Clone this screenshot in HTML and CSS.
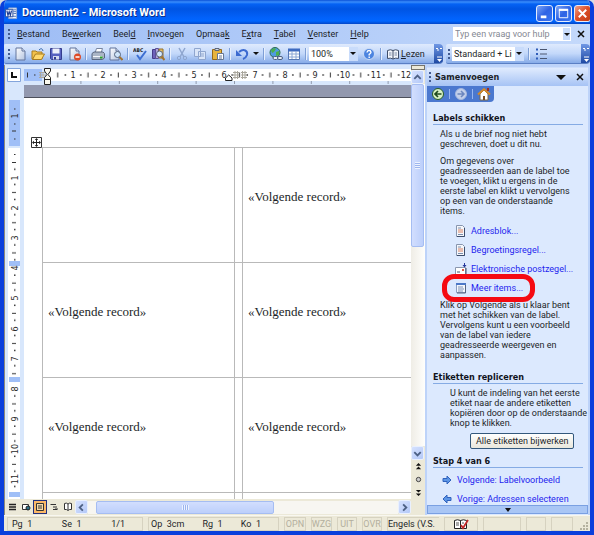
FILE: index.html
```html
<!DOCTYPE html>
<html lang="nl">
<head>
<meta charset="utf-8">
<title>Document2 - Microsoft Word</title>
<link rel="stylesheet" href="styles.css">
</head>
<body>
<svg class="defs" width="0" height="0" aria-hidden="true">
  <defs>
    <linearGradient id="metal" x1="0" y1="0" x2="1" y2="1"><stop offset="0" stop-color="#fff"/><stop offset="1" stop-color="#b4c4e0"/></linearGradient>
    <symbol id="page" viewBox="0 0 14 14"><path d="M3 1h6l3 3v9H3z" fill="url(#metal)" stroke="#62759c"/><path d="M9 1v3h3" fill="#dfe8f6" stroke="#62759c"/></symbol>
    <symbol id="letter" viewBox="0 0 12 12"><path d="M1.500 .5h6l2 2v9h-8z" fill="#f5f7fb" stroke="#8795ae"/><path d="M9.500 3v8.500H2" fill="none" stroke="#3d4d6b"/><path d="M3 3h3M3 9.500h5" stroke="#7c8dab"/><path d="M3 5h5M3 7h5" stroke="#d98264"/></symbol>
    <symbol id="chev-up" viewBox="0 0 12 12"><path d="M2.500 7.500 6 4l3.500 3.500" fill="none" stroke="#4d6185" stroke-width="2"/></symbol>
    <symbol id="arrow" viewBox="0 0 10 10"><path d="M1 3.500h4V1l4 4-4 4V6.500H1z" fill="#5d96e6" stroke="#2f62bd"/></symbol>
  </defs>
</svg>
<div class="window">
  <header class="titlebar">
    <svg class="logo" viewBox="0 0 14 14"><path d="M4 1h8.500v11.500H4z" fill="#eef3fc" stroke="#98aed4"/><path d="M9 3h3M9 5h3M9 7h3M6 10h6" stroke="#5477b8"/><path d="M.5 2.500h8v8h-8z" fill="#f4f7fe" stroke="#264c9c"/><path d="m2 4 1.200 5L4.500 5l1.300 4L7 4" fill="none" stroke="#1e3f94" stroke-width="1.300"/></svg>
    <h1>Document2 - Microsoft Word</h1>
    <div class="captions">
      <button class="caption" aria-label="Minimaliseren"><svg viewBox="0 0 16 16"><path d="M4 11.500h6" stroke="#fff" stroke-width="3"/></svg></button>
      <button class="caption" aria-label="Maximaliseren"><svg viewBox="0 0 16 16"><path d="M3.500 4.500h9v8h-9z" fill="none" stroke="#fff"/><path d="M3 4h10" stroke="#fff" stroke-width="2"/></svg></button>
      <button class="caption close" aria-label="Sluiten"><svg viewBox="0 0 16 16"><path d="m4 4 8 8m0-8-8 8" stroke="#fff" stroke-width="2"/></svg></button>
    </div>
  </header>

  <nav class="menubar">
    <span class="grip"></span>
    <ul class="menus">
      <li><a href="#"><u>B</u>estand</a></li>
      <li><a href="#">Be<u>w</u>erken</a></li>
      <li><a href="#">Beel<u>d</u></a></li>
      <li><a href="#"><u>I</u>nvoegen</a></li>
      <li><a href="#">Opmaa<u>k</u></a></li>
      <li><a href="#">E<u>x</u>tra</a></li>
      <li><a href="#"><u>T</u>abel</a></li>
      <li><a href="#"><u>V</u>enster</a></li>
      <li><a href="#"><u>H</u>elp</a></li>
    </ul>
    <div class="ask">
      <input type="text" aria-label="Vraag" placeholder="Typ een vraag voor hulp">
      <button class="drop" aria-label="Vragenlijst"></button>
    </div>
    <button class="x" aria-label="Document sluiten"><svg viewBox="0 0 8 8"><path d="m1 1 6 6m0-6L1 7" stroke="#111" stroke-width="1.500"/></svg></button>
  </nav>

  <div class="toolbars">
    <div class="toolbar standard">
      <span class="grip"></span>
      <button aria-label="Nieuw"><svg viewBox="0 0 14 14"><use href="#page"/></svg></button>
      <button aria-label="Openen"><svg viewBox="0 0 14 14"><path d="M1 4h4l1 1h5v7H1z" fill="#f3c24c" stroke="#a87c20"/><path d="m1.500 12.500 3-5.500h9l-3 5.500z" fill="#ffd96d" stroke="#a87c20"/><path d="M8 3q3-3 4 1" fill="none" stroke="#3565a8"/></svg></button>
      <button aria-label="Opslaan"><svg viewBox="0 0 14 14"><path d="M1.500 1.500h11v11h-10l-1-1z" fill="#5761c0" stroke="#343c8e"/><path d="M3.500 1.500h7v5h-7z" fill="#eef1fb"/><path d="M4 9h6v3.500H4z" fill="#d5dbee"/><path d="M5 10h2v2.500H5z" fill="#343c8e"/></svg></button>
      <button aria-label="Machtiging"><svg viewBox="0 0 14 14"><use href="#page"/><circle cx="10.500" cy="10" r="3.500" fill="#df4a26"/><path d="M8.500 10h4" stroke="#fff" stroke-width="1.500"/></svg></button>
      <i class="sep"></i>
      <button aria-label="Afdrukken"><svg viewBox="0 0 14 14"><path d="m4 6 1.500-4.500h6L10 6z" fill="#fff" stroke="#7886a0"/><path d="M1 6.500 3 5h9l1.500 1.500V11l-2 1.500H1z" fill="#aab5c6" stroke="#59667f"/><path d="M2 9.500h9" stroke="#f3f6fa"/><path d="M9 10.500h2.500" stroke="#2aa02a" stroke-width="2"/></svg></button>
      <button aria-label="Afdrukvoorbeeld"><svg viewBox="0 0 14 14"><use href="#page" x="-2"/><circle cx="8.500" cy="7.500" r="3" fill="#cfe5fa" stroke="#55647e"/><path d="m10.500 10 3 3" stroke="#a37430" stroke-width="2"/></svg></button>
      <i class="sep"></i>
      <button aria-label="Spelling"><svg viewBox="0 0 14 14"><text class="abc" x="0" y="5">ABC</text><path d="m4 8 3 4 6-8" fill="none" stroke="#3d6fd2" stroke-width="2"/></svg></button>
      <button aria-label="Onderzoeken"><svg viewBox="0 0 14 14"><path d="M1.500 2.500h3v9h-3z" fill="#6d62bb" stroke="#463d88"/><path d="M4.500 1.500h3v10h-3z" fill="#b1a3d8" stroke="#5c5198"/><path d="M8 2h4v9H8z" fill="#e6c064" stroke="#95702a"/><circle cx="8.500" cy="7" r="3" fill="#d8ebfb" stroke="#5a647c"/><path d="m10.500 9.500 3 3.500" stroke="#a37430" stroke-width="2"/></svg></button>
      <i class="sep"></i>
      <button aria-label="Knippen" disabled><svg viewBox="0 0 14 14"><path d="m4 1 5 9m1-9-5 9" stroke="#8fa6cf" stroke-width="1.500"/><circle cx="4" cy="11" r="1.700" fill="none" stroke="#8fa6cf"/><circle cx="10" cy="11" r="1.700" fill="none" stroke="#8fa6cf"/></svg></button>
      <button aria-label="Kopiëren" disabled><svg viewBox="0 0 14 14"><path d="M1.500 1.500h6v8h-6zM5.500 4.500h7v8h-7z" fill="#d9e5f8" stroke="#8fa6cf"/><path d="M7 7h4M7 9h4" stroke="#8fa6cf"/></svg></button>
      <button aria-label="Plakken"><svg viewBox="0 0 14 14"><path d="M1.500 2.500h9v10h-9z" fill="#e6b33e" stroke="#94691b"/><path d="M4 1.500h4v2H4z" fill="#d4d9e2" stroke="#5c6678"/><path d="M6.500 6.500h6v6h-6z" fill="#fff" stroke="#667797"/><path d="M8 9h3M8 11h3" stroke="#667797"/></svg></button>
      <i class="sep"></i>
      <button aria-label="Ongedaan maken"><svg viewBox="0 0 14 14"><path d="M4 5c5-4 9-1 8 3q-1 3-4 4" fill="none" stroke="#3b6ad0" stroke-width="2"/><path d="M1 3v6h6z" fill="#3b6ad0"/></svg></button>
      <button class="tiny" aria-label="Lijst met acties"></button>
      <i class="sep"></i>
      <button aria-label="Hyperlink"><svg viewBox="0 0 14 14"><circle cx="6" cy="5.500" r="5" fill="#4f9be0" stroke="#2b6b50"/><path d="M2 3q3-3 5-1l-2 3-2 1zM7 5l3-1v4l-3 1z" fill="#4bb04b"/><rect x="4" y="9.500" width="5" height="3" rx="1.500" fill="#e8eef7" stroke="#4b5f80"/><rect x="8.500" y="9.500" width="5" height="3" rx="1.500" fill="#e8eef7" stroke="#4b5f80"/></svg></button>
      <button aria-label="Tabel invoegen"><svg viewBox="0 0 14 14"><path d="M1.500 2.500h11v10h-11z" fill="#fff" stroke="#5577b4"/><path d="M1 3h12" stroke="#3f6bc0" stroke-width="3"/><path d="M5 4v8M9 4v8M2 7h10M2 10h10" stroke="#8ba6d4"/></svg></button>
      <i class="sep"></i>
      <span class="combo zoom"><select aria-label="In-/uitzoomen"><option>100%</option></select></span>
      <button aria-label="Help"><svg viewBox="0 0 14 14"><circle cx="7" cy="7" r="5.500" fill="#4b84e0" stroke="#ccdcf5"/><path d="M5 5.500Q5.200 3.500 7 3.500T9 5.300Q9 6.300 7.200 7.300V8.500M7.200 9.500V11" fill="none" stroke="#fff" stroke-width="1.400"/></svg></button>
      <i class="sep"></i>
      <button class="read"><svg viewBox="0 0 14 14"><path d="M1.500 3.500q3-1.500 5.500 0 2.500-1.500 5.500 0v8q-3-1-5.500.5-2.500-1.500-5.500-.5zM7 3.500V12" fill="#f3f6fb" stroke="#3f4d68"/><path d="M3 6h2.500M3 8h2.500M8.500 6H11M8.500 8H11" stroke="#7c8ba7"/></svg><span><u>L</u>ezen</span></button>
      <button class="more" aria-label="Meer knoppen"><svg viewBox="0 0 8 20"><path d="M1 4.500h2M5 4.500h2M2 6h2M2 13h5" stroke="#fff"/><path d="m2 15 5 0-2.500 3z" fill="#fff"/></svg></button>
    </div>
    <div class="toolbar format">
      <span class="grip"></span>
      <span class="combo style"><select aria-label="Stijl"><option>Standaard + Links: 0,2 cm</option></select></span>
      <i class="sep"></i>
      <button aria-label="Opsommingstekens"><svg viewBox="0 0 14 14"><path d="M2 2.500h2M2 7h2M2 11.500h2" stroke="#2f5cb8" stroke-width="2"/><path d="M6 2.500h7M6 7h7M6 11.500h7" stroke="#4a5670"/></svg></button>
      <button class="more" aria-label="Meer knoppen"><svg viewBox="0 0 8 20"><path d="M1 4.500h2M5 4.500h2M2 6h2M2 13h5" stroke="#fff"/><path d="m2 15 5 0-2.500 3z" fill="#fff"/></svg></button>
    </div>
  </div>

  <main class="workspace">
    <section class="editor">
      <div class="corner"><svg viewBox="0 0 14 14"><path d="M.5.5h13v13H.5z" fill="#fff" stroke="#83a5dc"/><path d="M5 4v5h5" fill="none" stroke="#111" stroke-width="2"/></svg></div>
      <div class="hruler">
        <svg width="700" height="20">
          <defs><pattern id="hticks" x="18.700" y="0" width="30.300" height="20" patternUnits="userSpaceOnUse"><path d="M7 10h1.500M22 10h1.500" stroke="#333" stroke-width="1.500"/><path d="M15 7.500v5" stroke="#333"/></pattern>
          <pattern id="htabs" x="19" y="0" width="38.400" height="20" patternUnits="userSpaceOnUse"><path d="M38 16v3" stroke="#8a93a5"/></pattern></defs>
          <path d="M24 4h700v12H24z" fill="#fff"/><path d="M0 4h18v12H0z" fill="#a0bff7"/>
          <path d="M3.500 7.500v5M10 10h1.500" stroke="#333"/>
          <path d="M28 0h700v20H28z" fill="url(#hticks)"/><path d="M20 0h700v20H20z" fill="url(#htabs)"/>
          <g class="nums"><text x="49" y="13">1</text><text x="79" y="13">2</text><text x="110" y="13">3</text><text x="140" y="13">4</text><text x="170" y="13">5</text><text x="200" y="13">6</text><text x="231" y="13">7</text><text x="261" y="13">8</text><text x="291" y="13">9</text><text x="321" y="13">10</text><text x="352" y="13">11</text><text x="382" y="13">12</text></g>
          <path d="M15 7.500h7M15 10h7M15 12.500h7M16.500 7v6M19 7v6M209 7.500h6M209 10h6M209 12.500h6M211 6v8M213.500 6v8M217 7.500h6M217 10h6M217 12.500h6M218.500 6v8M221 6v8" stroke="#aaa79d"/>
          <path d="M20.500 3.500h6V6l-2.500 3.500 2.500 3v7h-6v-7l2.500-3L20.500 6zM20.500 14.500h6" fill="#fbf9ee" stroke="#222"/>
          <path d="M201.500 15.500v-2.500l3.200-3 3.300 3v2.500z" fill="#fff" stroke="#222"/>
        </svg>
      </div>
      <div class="vscroll">
        <span class="split"></span>
        <button class="sb" aria-label="Omhoog"><svg viewBox="0 0 12 12"><use href="#chev-up"/></svg></button>
        <div class="vtrack"><span class="vthumb"></span></div>
        <button class="sb" aria-label="Omlaag"><svg class="flip" viewBox="0 0 12 12"><use href="#chev-up"/></svg></button>
        <button class="browse" aria-label="Vorige pagina"><svg viewBox="0 0 8 8"><path d="m4 0 3 3H1zM4 4l3 3H1z" fill="#111"/></svg></button>
        <button class="browse" aria-label="Bladeren"><svg viewBox="0 0 8 8"><circle cx="4" cy="4" r="2.500" fill="#ccc" stroke="#333"/></svg></button>
        <button class="browse" aria-label="Volgende pagina"><svg class="flip" viewBox="0 0 8 8"><path d="m4 0 3 3H1zM4 4l3 3H1z" fill="#111"/></svg></button>
      </div>
      <div class="vruler">
        <svg width="19" height="700">
          <defs><pattern id="vticks" x="0" y="62.300" width="19" height="30.200" patternUnits="userSpaceOnUse"><path d="M9 7h1.500M9 22h1.500" stroke="#333" stroke-width="1.500"/><path d="M7 15h4" stroke="#333"/></pattern></defs>
          <path d="M3 63h12v700H3z" fill="#fff"/>
          <path d="M3 78h12v700H3z" fill="url(#vticks)"/>
          <path d="M9 69.500h1.500M7 77.500h4" stroke="#333"/>
          <path d="M4 15h11v46H4zM4 176h11v5H4zM4 292h11v5H4zM4 407h11v5H4z" fill="#a0bff7"/>
          <path d="M9 24h1.500M7 46h4M9 39h1.500M9 54h1.500" stroke="#333"/>
          <g class="nums"><text transform="translate(13 31)rotate(-90)">1</text><text transform="translate(13 93)rotate(-90)">1</text><text transform="translate(13 123)rotate(-90)">2</text><text transform="translate(13 153)rotate(-90)">3</text><text transform="translate(13 183)rotate(-90)">4</text><text transform="translate(13 213)rotate(-90)">5</text><text transform="translate(13 244)rotate(-90)">6</text><text transform="translate(13 274)rotate(-90)">7</text><text transform="translate(13 304)rotate(-90)">8</text><text transform="translate(13 334)rotate(-90)">9</text><text transform="translate(13 364)rotate(-90)">10</text><text transform="translate(13 394)rotate(-90)">11</text></g>
        </svg>
      </div>
      <div class="canvas">
        <div class="sheet">
          <svg class="handle" viewBox="0 0 11 11"><path d="M.5.5h10v10H.5z" fill="#fff" stroke="#333"/><path d="M5.500 2v7M2 5.500h7" stroke="#222"/><path d="m5.500 1 1.700 2H3.800zM5.500 10l1.700-2H3.800zM1 5.500l2-1.700v3.400zM10 5.500 8 3.800v3.400z" fill="#222"/></svg>
          <table class="labels">
            <colgroup><col class="wide"><col class="gutter"><col></colgroup>
            <tr><td></td><td></td><td>«Volgende record»</td></tr>
            <tr><td>«Volgende record»</td><td></td><td>«Volgende record»</td></tr>
            <tr><td>«Volgende record»</td><td></td><td>«Volgende record»</td></tr>
            <tr><td></td><td></td><td></td></tr>
          </table>
        </div>
      </div>
      <div class="footrow">
        <button class="view" aria-label="Normaal"><svg viewBox="0 0 12 12"><path d="M3 3.500h7M3 6h7M3 8.500h7" stroke="#222" stroke-width="1.300"/></svg></button>
        <button class="view" aria-label="Weblay-out"><svg viewBox="0 0 12 12"><path d="M2.500 3.500h6v5h-6z" fill="#fff" stroke="#333"/><circle cx="8" cy="7" r="2" fill="#2d6f85" stroke="#222"/></svg></button>
        <button class="view on" aria-label="Afdruklay-out"><svg viewBox="0 0 12 12"><path d="M2.500 2.500h7v7h-7z" fill="#f8dba9" stroke="#333"/><path d="M4 5h4M4 7h4" stroke="#333"/></svg></button>
        <button class="view" aria-label="Overzicht"><svg viewBox="0 0 12 12"><path d="M3 3.500h5M5 6h4M5 8.500h4M3 3v1M7 8h3" stroke="#333"/></svg></button>
        <button class="view" aria-label="Leesindeling"><svg viewBox="0 0 12 12"><path d="M2.500 2.500q2-1 3.500.5 1.500-1.500 3.500-.5v6q-2-.5-3.500 1-1.500-1.500-3.500-1zM6 3v6" fill="#fff" stroke="#333"/></svg></button>
        <button class="sb" aria-label="Naar links"><svg class="left" viewBox="0 0 12 12"><use href="#chev-up"/></svg></button>
        <div class="htrack"><span class="hthumb"></span></div>
        <button class="sb" aria-label="Naar rechts"><svg class="right" viewBox="0 0 12 12"><use href="#chev-up"/></svg></button>
      </div>
    </section>

    <aside class="pane">
      <div class="panehead">
        <span class="grip"></span>
        <h2>Samenvoegen</h2>
        <button class="tri" aria-label="Andere taakvensters"></button>
        <button class="x" aria-label="Taakvenster sluiten"><svg viewBox="0 0 8 8"><path d="m1 1 6 6m0-6L1 7" stroke="#111" stroke-width="1.500"/></svg></button>
      </div>
      <div class="panenav">
        <button aria-label="Terug"><svg viewBox="0 0 14 14"><circle cx="7" cy="7" r="5.500" fill="#d7efc4" stroke="#265c26"/><path d="M10.500 7H4m3-3L4 7l3 3" fill="none" stroke="#1f4a1f" stroke-width="1.700"/></svg></button>
        <i></i>
        <button aria-label="Vooruit" disabled><svg viewBox="0 0 14 14"><circle cx="7" cy="7" r="5.500" fill="#c3d0ea" stroke="#a5b8de"/><path d="M3.500 7H10M7 4l3 3-3 3" fill="none" stroke="#6c87bf" stroke-width="1.500"/></svg></button>
        <i></i>
        <button aria-label="Start"><svg viewBox="0 0 14 14"><path d="M3 7v6h8V7L7 3z" fill="#fff" stroke="#7a6a4e"/><path d="M1 7.500 7 2l6 5.500" fill="none" stroke="#d48a2b" stroke-width="2"/><path d="M6 9h2v4H6z" fill="#7c4d20"/><path d="M10 1h2v3h-2z" fill="#a03020"/></svg></button>
      </div>
      <div class="panebody">
        <section>
          <h3>Labels schikken</h3>
          <p>Als u de brief nog niet hebt<br>geschreven, doet u dit nu.</p>
          <p>Om gegevens over<br>geadresseerden aan de label toe<br>te voegen, klikt u ergens in de<br>eerste label en klikt u vervolgens<br>op een van de onderstaande<br>items.</p>
          <ul class="links">
            <li><a href="#"><svg viewBox="0 0 12 12"><use href="#letter"/></svg>Adresblok...</a></li>
            <li><a href="#"><svg viewBox="0 0 12 12"><use href="#letter"/></svg>Begroetingsregel...</a></li>
            <li><a href="#"><svg viewBox="0 0 12 12"><path d="M.5 4.500h10v7H.5z" fill="#fff" stroke="#8a97af"/><path d="M1 11.500h10V5M2 9h3" fill="none" stroke="#44516b"/><path d="M7 6h2v2H7z" fill="#da5a45"/><path d="M9.500 0v3" stroke="#25379c"/><path d="M7.500 2h4l-2 2.500z" fill="#25379c"/></svg>Elektronische postzegel...</a></li>
            <li><a href="#" class="marked"><svg viewBox="0 0 12 12"><path d="M1.500 1.500h9v9h-9z" fill="#f4f7fc" stroke="#8b9dbe"/><path d="M1 2h10" stroke="#4c78c8" stroke-width="2"/><path d="M3 5h5M3 7h6M3 9h5" stroke="#7e92b5"/><path d="M10.500 3v8H2" fill="none" stroke="#54637f"/></svg>Meer items...</a></li>
          </ul>
          <p>Klik op Volgende als u klaar bent<br>met het schikken van de label.<br>Vervolgens kunt u een voorbeeld<br>van de label van iedere<br>geadresseerde weergeven en<br>aanpassen.</p>
        </section>
        <section>
          <h3>Etiketten repliceren</h3>
          <p class="deep">U kunt de indeling van het eerste<br>etiket naar de andere etiketten<br>kopiëren door op de onderstaande<br>knop te klikken.</p>
          <button class="update">Alle etiketten bijwerken</button>
        </section>
        <section>
          <h3>Stap 4 van 6</h3>
          <ul class="steps">
            <li><a href="#"><svg viewBox="0 0 10 10"><use href="#arrow"/></svg>Volgende: Labelvoorbeeld</a></li>
            <li><a href="#"><svg class="flip" viewBox="0 0 10 10"><use href="#arrow"/></svg>Vorige: Adressen selecteren</a></li>
          </ul>
        </section>
      </div>
      <button class="panemore" aria-label="Meer"></button>
    </aside>
  </main>

  <footer class="status">
    <div class="cell place"><span>Pg&nbsp; 1</span><span>Se&nbsp; 1</span><span>1/1</span></div>
    <div class="cell spot"><span>Op&nbsp; 3cm</span><span>Rg&nbsp; 1</span><span>Ko&nbsp; 1</span></div>
    <div class="cell off">OPN</div>
    <div class="cell off">WZG</div>
    <div class="cell off">UIT</div>
    <div class="cell off">OVR</div>
    <div class="cell lang">Engels (V.S.</div>
    <div class="cell book"><svg viewBox="0 0 16 12"><path d="M1.500 2.500q3-1.500 6 0 3-1.500 6 0v8h-12zM7.500 2.500v8" fill="#fff" stroke="#222"/><path d="M3 5h3M3 7h3M9 5h2" stroke="#555"/><path d="m8 7 2 3 5-8" fill="none" stroke="#c22a2a" stroke-width="1.800"/></svg></div>
    <div class="cell"></div>
    <div class="cell"></div>
    <div class="cell"></div>
    <svg class="sizer" viewBox="0 0 10 10"><path d="M7 1h2v2H7zM4 4h2v2H4zM7 4h2v2H7zM1 7h2v2H1zM4 7h2v2H4zM7 7h2v2H7z" fill="#b5b29f"/></svg>
  </footer>
</div>
</body>
</html>
```
FILE: styles.css
```css
* { box-sizing: border-box; }
body {
  margin: 0;
  background: #d9dbe2;
  color: #1c1f28;
  font: 9px/10px Roboto, sans-serif;
}
h1, h2, h3, p, ul { margin: 0; padding: 0; }
ul { list-style: none; }
a { color: inherit; text-decoration: none; }
button {
  display: flex;
  align-items: center;
  justify-content: center;
  flex: none;
  margin: 0;
  padding: 0;
  border: 0;
  background: none;
  color: inherit;
  font: inherit;
}
input, select {
  margin: 0;
  border: 0;
  border-radius: 0;
  background: #fff;
  color: inherit;
  font: inherit;
}
svg { display: block; flex: none; }
.defs { position: absolute; }

.window {
  display: flex;
  flex-direction: column;
  height: 100vh;
  overflow: hidden;
  border: solid #0a3fdc;
  border-width: 0 4px 4px;
  border-radius: 7px 7px 0 0;
  background: #ece9d8;
}

/* Title bar */
.titlebar {
  display: flex;
  align-items: center;
  flex: none;
  height: 24px;
  gap: 4px;
  margin: 0 -4px;
  padding: 2px 3px 0 5px;
  background: linear-gradient(#0a51d8, #3a8dfc 2px, #0562f4 4px, #0054e3 9px, #0262fb 18px, #0066ff 21px, #0246c8);
}
.logo { width: 13px; height: 13px; }
h1 {
  flex: 1;
  color: #fff;
  font: bold 11px/14px Roboto, sans-serif;
  text-shadow: 1px 1px 0 #0a2e8c;
}
.captions { display: flex; gap: 2px; }
.caption {
  width: 17px;
  height: 17px;
  border: 1px solid #e4ecfd;
  border-radius: 3px;
  background: linear-gradient(135deg, #7ba5f7, #2f63e4 50%, #3a76f2);
}
.caption.close { background: linear-gradient(135deg, #f0a088, #dd4e28 50%, #c23c12); }
.caption svg { width: 15px; height: 15px; }

/* Menu bar */
.grip {
  flex: none;
  width: 2px;
  height: 10px;
  background: repeating-linear-gradient(#41598f 0 2px, transparent 2px 4px);
}
.menubar {
  display: flex;
  align-items: center;
  flex: none;
  height: 20px;
  padding: 0 5px 0 4px;
  background: linear-gradient(90deg, #9ebdf5, #c4d9fb);
}
.menus { display: flex; gap: 12px; margin: 0 auto 0 7px; }
.ask { display: flex; width: 118px; height: 14px; margin-right: 6px; }
.ask input { flex: 1; min-width: 0; padding: 0 2px; }
.ask input::placeholder { color: #858993; opacity: 1; }
.x svg { width: 8px; height: 8px; }
.drop { width: 9px; background: #c9dcfb; border: 1px solid #fff; }
.drop::after, .tiny::after, .combo::after, .panemore::after, .tri::after {
  content: "";
  border: solid transparent;
  border-width: 3px 3px 0;
  border-top-color: #111;
}

/* Toolbars */
.toolbars {
  display: flex;
  flex: none;
  gap: 3px;
  height: 21px;
  padding-bottom: 1px;
  background: #bdd3f9;
}
.toolbar {
  display: flex;
  align-items: center;
  gap: 4px;
  padding-left: 4px;
  overflow: hidden;
  border-radius: 2px 4px 4px 2px;
  border-bottom: 1px solid #5a7fc4;
  background: linear-gradient(#dfeafd, #c3d8fa 50%, #86abe8);
}
.standard { width: 439px; }
.format { flex: 1; padding-left: 2px; }
.toolbar svg { width: 14px; height: 14px; }
.toolbar .grip + button { margin-left: -1px; }
.abc { font: bold 5px "DejaVu Sans Condensed", sans-serif; fill: #222; }
.sep {
  flex: none;
  width: 2px;
  height: 12px;
  border-left: 1px solid #7f9fd6;
  border-right: 1px solid #e6effd;
}
.tiny { width: 6px; }
.combo {
  display: flex;
  align-items: center;
  flex: none;
  height: 14px;
  padding-right: 2px;
  background: linear-gradient(90deg, #fff calc(100% - 9px), #c9dcfb 0);
}
.combo select {
  flex: 1;
  min-width: 0;
  margin-right: 2px;
  padding: 0 2px;
  overflow: hidden;
  appearance: none;
  background: none;
}
.zoom { width: 49px; margin-left: -2px; }
.style { width: 72px; margin-left: -2px; }
.read { gap: 1px; }
.toolbar .more {
  width: 9px;
  align-self: stretch;
  margin-left: auto;
  background: linear-gradient(#6f97e4, #1f4aa4);
}
.toolbar .more svg { width: 8px; height: 20px; }

/* Editing area */
.workspace { display: flex; flex: 1; min-height: 0; }
.editor {
  display: grid;
  grid-template: 20px minmax(0, 1fr) 16px / 19px minmax(0, 1fr) 14px;
  flex: 1;
  min-width: 0;
  border-left: 1px solid #8d8a7c;
  background: #d8e7fc;
}
.corner { padding: 3px 0 0 2px; }
.corner svg { width: 14px; height: 14px; }
.hruler, .vruler { overflow: hidden; }
.vruler { grid-area: 2 / 1; }
.nums {
  font: 9px "DejaVu Sans Condensed", sans-serif;
  text-anchor: middle;
  fill: #2a2a2a;
}
.vscroll {
  display: flex;
  flex-direction: column;
  grid-area: 1 / 3 / 3 / 4;
  background: #ece9d8;
}
.split {
  flex: none;
  height: 5px;
  border: 1px solid #77746a;
  background: #ece9d8;
}
.sb {
  width: 13px;
  height: 14px;
  border: 1px solid #e9f0fe;
  border-radius: 2px;
  background: linear-gradient(135deg, #d5e1fe, #b4c9f8);
}
.sb svg { width: 11px; height: 11px; }
.flip { transform: rotate(180deg); }
.left { transform: rotate(-90deg); }
.right { transform: rotate(90deg); }
.vtrack { flex: 1; background: linear-gradient(90deg, #efede6, #fefefc); }
.vthumb {
  display: flex;
  width: 13px;
  height: 45%;
  border: 1px solid #a5bdf2;
  border-radius: 2px;
  background: linear-gradient(90deg, #d2defe, #bccffb);
}
.vthumb::after {
  content: "";
  width: 5px;
  height: 7px;
  margin: auto;
  background: repeating-linear-gradient(#edf3ff 0 1px, #9db5ee 1px 2px);
}
.browse { height: 13px; }
.browse svg { width: 7px; height: 7px; }
.canvas {
  min-width: 0;
  overflow: hidden;
  padding-top: 12px;
  background: #9298ae;
}
.sheet {
  height: 100%;
  padding: 39px 0 0 7px;
  border-top: 1px solid #4c4f5a;
  background: #fff;
}
.handle { width: 11px; height: 11px; }
.labels {
  width: calc(100% - 11px);
  margin: -1px 0 0 11px;
  border-collapse: collapse;
  table-layout: fixed;
  font: 13px/15px "Liberation Serif", serif;
}
.wide { width: 192px; }
.gutter { width: 8px; }
.labels td {
  height: 115px;
  padding: 41px 0 0 5px;
  border: 1px solid #b9b9b9;
  border-right: 0;
  vertical-align: top;
  white-space: nowrap;
}
.labels td:nth-child(2) { padding: 0; }
.footrow {
  display: flex;
  align-items: center;
  grid-area: 3 / 1 / 4 / 4;
  padding-right: 14px;
  background: #ece9d8;
}
.view { width: 14px; height: 14px; }
.view svg { width: 12px; height: 12px; }
.view.on { border: 1px solid #24307c; background: #fcb866; }
.htrack { flex: 1; padding-left: 8px; background: #f7f6f1; }
.hthumb {
  display: flex;
  width: 59%;
  height: 13px;
  border: 1px solid #a5bdf2;
  border-radius: 2px;
  background: linear-gradient(#d2defe, #bccffb);
}
.hthumb::after {
  content: "";
  width: 7px;
  height: 5px;
  margin: auto;
  background: repeating-linear-gradient(90deg, #edf3ff 0 1px, #9db5ee 1px 2px);
}

/* Task pane */
.pane {
  display: flex;
  flex-direction: column;
  flex: none;
  width: 165px;
  border: solid #bdd3f9;
  border-width: 0 2px;
  background: #dce9fe;
}
.panehead {
  display: flex;
  align-items: center;
  flex: none;
  height: 21px;
  padding: 3px 4px 0 2px;
  background: linear-gradient(#bdd3f9 2px, #e0ebfe 3px, #a6c3f5);
}
h2 { margin: 0 auto 0 4px; font: bold 9px/12px "DejaVu Sans Condensed", sans-serif; }
.tri { margin-right: 10px; }
.tri::after { border-width: 5px 5px 0; }
.panenav {
  display: flex;
  align-items: center;
  align-self: flex-start;
  flex: none;
  gap: 4px;
  height: 16px;
  padding: 0 3px 0 4px;
  border-radius: 0 0 4px 0;
  background: #4b78cf;
}
.panenav svg { width: 14px; height: 14px; }
.panenav i { width: 1px; height: 10px; background: #98b6ef; }
.panebody { flex: 1; min-height: 0; overflow: hidden; padding: 11px 5px 0 6px; }
.panebody section + section { padding-top: 5px; }
h3 {
  margin-bottom: 4px;
  border-bottom: 1px solid #85abe4;
  color: #10131c;
  font: bold 9px/11px "DejaVu Sans Condensed", sans-serif;
}
.panebody p { margin: 0 0 7px 7px; white-space: nowrap; }
.panebody .deep { margin: 0 0 5px 17px; }
.links, .steps { color: #1f1fee; }
.links { margin: -1px 0 3px 22px; }
.links a, .steps a {
  display: flex;
  align-items: center;
  gap: 4px;
  height: 19px;
  white-space: nowrap;
}
.panebody p + .links { margin-top: -2px; }
.links svg { width: 12px; height: 12px; }
.marked { position: relative; width: 80px; }
.marked::after {
  content: "";
  position: absolute;
  inset: -4px 0 -5px -13px;
  border: 5px solid #f50a12;
  border-radius: 12px;
}
.update {
  height: 16px;
  margin: 0 auto 2px 37px;
  padding: 0 5px;
  border: 1px solid #33587c;
  border-radius: 2px;
  background: linear-gradient(#fff, #e9e7dc);
}
.steps { margin: -2px 0 0 9px; }
.steps a { gap: 5px; }
.steps svg { width: 10px; height: 10px; }
.panemore {
  height: 9px;
  margin-bottom: 1px;
  border: 1px solid #7aa0e2;
  background: #a9c6f5;
}
.panemore::after { border-width: 4px 3px 0; }

/* Status bar */
.status {
  display: grid;
  grid-template-columns: 136px 131px 22px 21px 20px 20px 52px 34px 38px 20px 22px 1fr;
  gap: 5px;
  flex: none;
  height: 16px;
  padding: 1px 1px 1px 3px;
  border-top: 1px solid #f8f7f0;
  background: #ece9d8;
}
.cell {
  display: flex;
  align-items: center;
  min-width: 0;
  border: 1px solid #d6d2c0;
  white-space: nowrap;
}
.off { justify-content: center; color: #b3af9e; }
.place, .spot { justify-content: space-between; padding: 0 17px 0 4px; }
.spot { padding-left: 2px; }
.lang { overflow: hidden; border-right: 0; }
.book { justify-content: center; }
.book svg { width: 16px; height: 12px; }
.sizer { justify-self: end; align-self: end; width: 10px; height: 10px; }
```
